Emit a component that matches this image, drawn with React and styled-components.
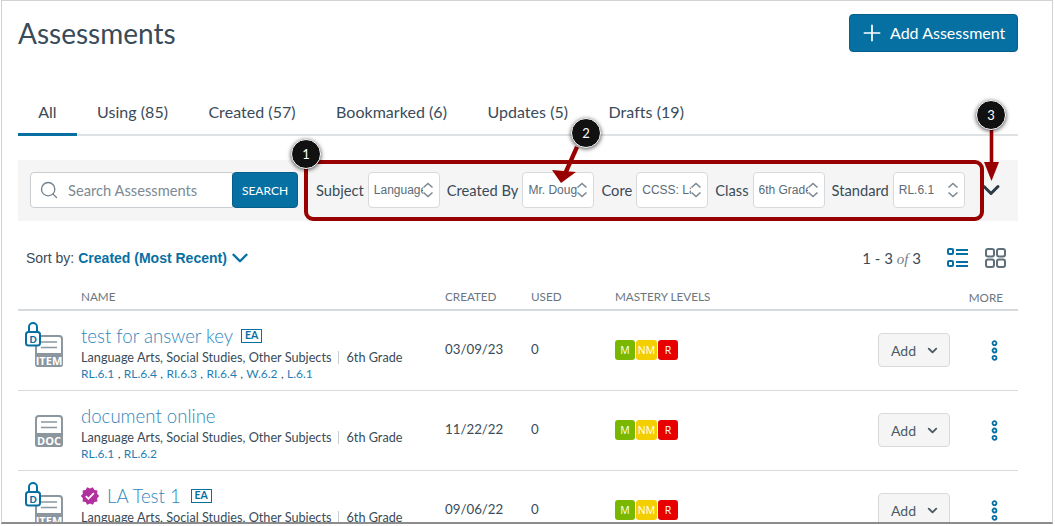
import React from 'react'
import styled, { createGlobalStyle } from 'styled-components'
import { Search, Plus, ChevronDown } from 'lucide-react'
import { MdVerified } from 'react-icons/md'

const GlobalStyle = createGlobalStyle`
  html, body {
    margin: 0;
    padding: 0;
    background: #fff;
    font-family: Lato, "Open Sans", sans-serif;
    color: #394b58;
  }
  * { box-sizing: border-box; }
`

const blue = '#0770a3'
const columns = '63px 364px 86px 84px 263px 72px 1fr'

const Frame = styled.div`
  position: relative;
  width: 1055px;
  height: 526px;
  overflow: hidden;
  background: #fff;
`

const Window = styled.div`
  margin-left: 1px;
  width: 1052px;
  height: 524px;
  overflow: hidden;
  padding: 13px 34px 0 16px;
  border: 1px solid #d2d2d2;
  border-bottom: 2px solid #8c8c8c;
`

const Header = styled.header`
  display: flex;
  justify-content: space-between;
  align-items: center;
  height: 38px;
`

const Title = styled.h1`
  margin: 0;
  font-size: 28px;
  font-weight: 400;
  color: #394b58;
`

const AddAssessment = styled.button`
  display: flex;
  align-items: center;
  gap: 5px;
  width: 169px;
  height: 38px;
  padding: 0 0 1px 9px;
  border: 1px solid #065f8a;
  border-radius: 4px;
  background: ${blue};
  color: #fff;
  font: 400 16px Lato, sans-serif;
`

const Tabs = styled.nav`
  display: flex;
  height: 40px;
  margin-top: 44px;
  border-bottom: 2px solid #dfe2e4;
`

const Tab = styled.div`
  height: 40px;
  padding: 6px 20.2px 0;
  font-size: 16px;
  letter-spacing: 0.04px;
  line-height: 20px;
  color: #394b58;
  border-bottom: 3px solid ${p => (p.$active ? blue : 'transparent')};
`

const FilterBar = styled.section`
  display: flex;
  align-items: center;
  height: 61px;
  margin-top: 24px;
  padding: 0 0 1px 12px;
  background: #f5f5f5;
`

const SearchBox = styled.div`
  display: flex;
  align-items: center;
  gap: 9px;
  width: 203px;
  height: 36px;
  padding-left: 8px;
  background: #fff;
  border: 1px solid #c7cdd1;
  border-radius: 4px 0 0 4px;
  color: #73818c;
`

const SearchInput = styled.input`
  width: 150px;
  border: 0;
  outline: 0;
  padding: 0;
  background: transparent;
  font: 400 14.7px Lato, sans-serif;
  &::placeholder { color: #7d8a93; opacity: 1; }
`

const SearchButton = styled.button`
  width: 66px;
  height: 36px;
  margin-left: -1px;
  margin-right: 18px;
  padding: 0;
  border: 1px solid #065f8a;
  border-radius: 4px;
  background: ${blue};
  color: #fff;
  font: 400 12px Lato, sans-serif;
`

const Field = styled.label`
  display: flex;
  align-items: center;
  gap: 4px;
  margin-right: 7px;
  font-size: 14.7px;
  color: #394b58;
`

const SelectWrap = styled.div`
  position: relative;
  width: 72px;
  height: 36px;
  svg {
    position: absolute;
    top: 10px;
    right: 6px;
  }
`

const NativeSelect = styled.select`
  appearance: none;
  width: 100%;
  height: 100%;
  padding: 0 16px 0 5px;
  background: #fff;
  border: 1px solid #d7dadd;
  border-radius: 4px;
  color: #5b6b76;
  font: 400 12px "Liberation Sans", Arial, sans-serif;
  outline: 0;
`

const BarToggle = styled.button`
  display: flex;
  margin-left: 5px;
  padding: 0;
  border: 0;
  background: none;
  color: #2d3b45;
`

const SortRow = styled.div`
  display: flex;
  justify-content: space-between;
  align-items: center;
  height: 30px;
  margin-top: 22px;
  padding: 0 12px 0 8px;
`

const SortBy = styled.div`
  display: flex;
  align-items: center;
  gap: 4px;
  font: 400 14px "Liberation Sans", Arial, sans-serif;
  color: #394b58;
  b {
    color: ${blue};
    font-weight: 700;
  }
  svg {
    margin-left: -4px;
    color: ${blue};
  }
`

const Pager = styled.div`
  display: flex;
  align-items: center;
  gap: 17px;
  font-size: 15px;
  color: #394b58;
  em {
    font-family: "Liberation Serif", serif;
    color: #73818c;
  }
`

const ViewIcons = styled.div`
  display: flex;
  gap: 17px;
  margin-left: 9px;
`

const HeadRow = styled.div`
  display: grid;
  grid-template-columns: ${columns};
  align-items: end;
  height: 38px;
  padding-bottom: 6px;
  border-bottom: 2px solid #d7dadd;
  font-size: 11.7px;
  line-height: 14px;
  color: #6b7780;
`

const MoreHead = styled.div`
  grid-column: 7;
  justify-self: end;
  margin-right: 15px;
  margin-bottom: -1px;
`

const Row = styled.article`
  display: grid;
  grid-template-columns: ${columns};
  align-items: center;
  height: 80px;
  padding-bottom: 1px;
  border-bottom: 1px solid #d7dadd;
`

const ThumbCell = styled.div`
  align-self: start;
  padding: 9px 0 0 2px;
`

const NameCell = styled.div`
  align-self: start;
  padding-top: 12px;
`

const NameLine = styled.div`
  display: flex;
  align-items: center;
  height: 25px;
  font-size: 18.6px;
  font-weight: 300;
  color: #2f86bd;
`

const Verified = styled(MdVerified)`
  margin: 0 7px 0 -1px;
  color: #b22f9e;
`

const EaBadge = styled.span`
  display: inline-block;
  width: 21px;
  height: 14px;
  margin-left: ${p => (p.$wide ? '10px' : '8px')};
  border: 1.5px solid ${blue};
  color: ${blue};
  font-size: 10.5px;
  font-weight: 700;
  line-height: 11px;
  text-align: center;
`

const Meta = styled.div`
  display: flex;
  align-items: center;
  height: 18px;
  font-size: 12.7px;
  color: #394b58;
  i {
    width: 1px;
    height: 13px;
    margin: 0 7px;
    background: #c7cdd1;
  }
`

const Standards = styled.div`
  height: 16px;
  font-size: 12px;
  line-height: 16px;
  word-spacing: 0.3px;
  color: #394b58;
  a { color: #1f7fb5; }
`

const DateCell = styled.div`
  padding-bottom: 2px;
  font-size: 13.3px;
  color: #394b58;
`

const Levels = styled.div`
  display: flex;
  gap: 1px;
`

const Level = styled.span`
  width: ${p => (p.$wide ? '21px' : '20px')};
  height: 20px;
  border-radius: 3px;
  background: ${p => p.$bg};
  color: #fff;
  font: 400 10.5px/20px "Open Sans", sans-serif;
  text-align: center;
`

const AddButton = styled.button`
  display: flex;
  align-items: center;
  justify-content: space-between;
  width: 72px;
  height: 34px;
  padding: 0 9px 0 12px;
  background: #f5f5f5;
  border: 1px solid #d7dadd;
  border-radius: 4px;
  color: #4b5b66;
  font: 400 14px Lato, sans-serif;
`

const MoreCell = styled.div`
  display: flex;
  justify-content: flex-end;
  padding-right: 20px;
`

// annotations sit on top of the screenshot
const RedBox = styled.div`
  position: absolute;
  left: 304px;
  top: 160px;
  width: 680px;
  height: 61px;
  border: 4px solid #990000;
  border-radius: 9px;
`

const Callout = styled.div`
  position: absolute;
  left: ${p => p.$x - 15}px;
  top: ${p => p.$y - 15}px;
  width: 30px;
  height: 30px;
  border: 1px solid #fff;
  border-radius: 50%;
  background: #111;
  box-shadow: 0 1px 4px rgba(0, 0, 0, 0.7);
  color: #fff;
  font: 400 13px/28px Lato, sans-serif;
  text-align: center;
`

const Arrows = styled.svg`
  position: absolute;
  left: 0;
  top: 0;
  pointer-events: none;
`

function UpDown () {
  return (
    <svg width='12' height='16' viewBox='0 0 12 16' fill='none' stroke='#7d8a93' strokeWidth='1.6'>
      <path d='M1.5 5.5 6 1.5l4.5 4' />
      <path d='M1.5 10.5 6 14.5l4.5-4' />
    </svg>
  )
}

function FilterSelect ({ label, value, options }) {
  return (
    <Field>
      {label}
      <SelectWrap>
        <NativeSelect defaultValue={value}>
          {options.map(o => <option key={o}>{o}</option>)}
        </NativeSelect>
        <UpDown />
      </SelectWrap>
    </Field>
  )
}

function ListIcon () {
  return (
    <svg width='21' height='20' viewBox='0 0 21 20' fill='none' stroke={blue} strokeWidth='2'>
      <rect x='1' y='1' width='5' height='5' rx='1' />
      <rect x='1' y='13' width='5' height='5' rx='1' />
      <path d='M9 2h12M9 6h12M9 14h12M9 18h12' />
    </svg>
  )
}

function GridIcon () {
  return (
    <svg width='21' height='20' viewBox='0 0 21 20' fill='none' stroke='#5f6f7a' strokeWidth='2'>
      <rect x='1' y='1' width='8' height='7.5' rx='2' />
      <rect x='12' y='1' width='8' height='7.5' rx='2' />
      <rect x='1' y='11.5' width='8' height='7.5' rx='2' />
      <rect x='12' y='11.5' width='8' height='7.5' rx='2' />
    </svg>
  )
}

function ThumbIcon ({ label, locked }) {
  return (
    <svg width='50' height='50' viewBox='0 0 50 50'>
      <rect x='16' y='16' width='26' height='30' rx='3' fill='#fff' stroke='#8b969e' strokeWidth='2' />
      <path d='M15 33h28v11a3 3 0 0 1-3 3H18a3 3 0 0 1-3-3z' fill='#8b969e' />
      <path d='M21 22h16M21 27.5h16' stroke='#8b969e' strokeWidth='1.6' />
      <text x='29' y='44.5' fill='#fff' fontFamily='"Open Sans", sans-serif' fontSize='11' fontWeight='700' textAnchor='middle'>{label}</text>
      {locked && (
        <g>
          <path d='M9 13V7a4 4 0 0 1 8 0v6' fill='none' stroke={blue} strokeWidth='2' />
          <rect x='6' y='12' width='14' height='13.5' rx='2.5' fill='#fff' stroke={blue} strokeWidth='2' />
          <text x='13' y='22.5' fill={blue} fontFamily='Lato, sans-serif' fontSize='9.5' fontWeight='900' textAnchor='middle'>D</text>
        </g>
      )}
    </svg>
  )
}

function Dots () {
  return (
    <svg width='7' height='21' viewBox='0 0 7 21' fill='none' stroke={blue} strokeWidth='1.8'>
      <circle cx='3.5' cy='3.2' r='2' />
      <circle cx='3.5' cy='10.5' r='2' />
      <circle cx='3.5' cy='17.8' r='2' />
    </svg>
  )
}

const tabs = ['All', 'Using (85)', 'Created (57)', 'Bookmarked (6)', 'Updates (5)', 'Drafts (19)']

const assessments = [
  { name: 'test for answer key', ea: true, icon: 'ITEM', locked: true, created: '03/09/23', standards: ['RL.6.1', 'RL.6.4', 'RI.6.3', 'RI.6.4', 'W.6.2', 'L.6.1'] },
  { name: 'document online', icon: 'DOC', created: '11/22/22', standards: ['RL.6.1', 'RL.6.2'] },
  { name: 'LA Test 1', ea: true, verified: true, icon: 'ITEM', locked: true, created: '09/06/22', standards: ['RL.6.1'] }
]

export default function App () {
  return (
    <Frame>
      <GlobalStyle />
      <Window>
        <Header>
          <Title>Assessments</Title>
          <AddAssessment><Plus size={26} strokeWidth={1.6} />Add Assessment</AddAssessment>
        </Header>
        <Tabs>
          {tabs.map((t, i) => <Tab key={t} $active={i === 0}>{t}</Tab>)}
        </Tabs>
        <FilterBar>
          <SearchBox>
            <Search size={20} strokeWidth={1.6} />
            <SearchInput placeholder='Search Assessments' />
          </SearchBox>
          <SearchButton>SEARCH</SearchButton>
          <FilterSelect label='Subject' value='Language Arts' options={['Language Arts']} />
          <FilterSelect label='Created By' value='Mr. Douglas' options={['Mr. Douglas']} />
          <FilterSelect label='Core' value='CCSS: Language' options={['CCSS: Language']} />
          <FilterSelect label='Class' value='6th Grade' options={['6th Grade']} />
          <FilterSelect label='Standard' value='RL.6.1' options={['RL.6.1']} />
          <BarToggle><ChevronDown size={28} strokeWidth={2.6} /></BarToggle>
        </FilterBar>
        <SortRow>
          <SortBy>
            Sort by: <b>Created (Most Recent)</b>
            <ChevronDown size={26} strokeWidth={2.2} />
          </SortBy>
          <Pager>
            <span>1 - 3 <em>of</em> 3</span>
            <ViewIcons><ListIcon /><GridIcon /></ViewIcons>
          </Pager>
        </SortRow>
        <HeadRow>
          <div />
          <div>NAME</div>
          <div>CREATED</div>
          <div>USED</div>
          <div>MASTERY LEVELS</div>
          <MoreHead>MORE</MoreHead>
        </HeadRow>
        {assessments.map(a => (
          <Row key={a.name}>
            <ThumbCell><ThumbIcon label={a.icon} locked={a.locked} /></ThumbCell>
            <NameCell>
              <NameLine>
                {a.verified && <Verified size={20} />}
                {a.name}
                {a.ea && <EaBadge $wide={a.verified}>EA</EaBadge>}
              </NameLine>
              <Meta>Language Arts, Social Studies, Other Subjects<i />6th Grade</Meta>
              <Standards>
                {a.standards.map((s, i) => (
                  <React.Fragment key={s}>
                    {i > 0 && ' , '}
                    <a>{s}</a>
                  </React.Fragment>
                ))}
              </Standards>
            </NameCell>
            <DateCell>{a.created}</DateCell>
            <DateCell>0</DateCell>
            <Levels>
              <Level $bg='#7ab800'>M</Level>
              <Level $bg='#f3ce00' $wide>NM</Level>
              <Level $bg='#e60000'>R</Level>
            </Levels>
            <AddButton>Add<ChevronDown size={15} strokeWidth={3} /></AddButton>
            <MoreCell><Dots /></MoreCell>
          </Row>
        ))}
      </Window>
      <RedBox />
      <Arrows width='1055' height='526' fill='#990000' stroke='none'>
        <path d='M989.7 128h3.6v36h-3.6z' />
        <path d='M984 162h15l-7.5 19z' />
        <path d='M575 146l4 1.8-12 27-4-1.8z' />
        <path d='M552 170l24 2-15 11z' />
      </Arrows>
      <Callout $x={306} $y={154}>1</Callout>
      <Callout $x={586} $y={133}>2</Callout>
      <Callout $x={991} $y={115}>3</Callout>
    </Frame>
  )
}
